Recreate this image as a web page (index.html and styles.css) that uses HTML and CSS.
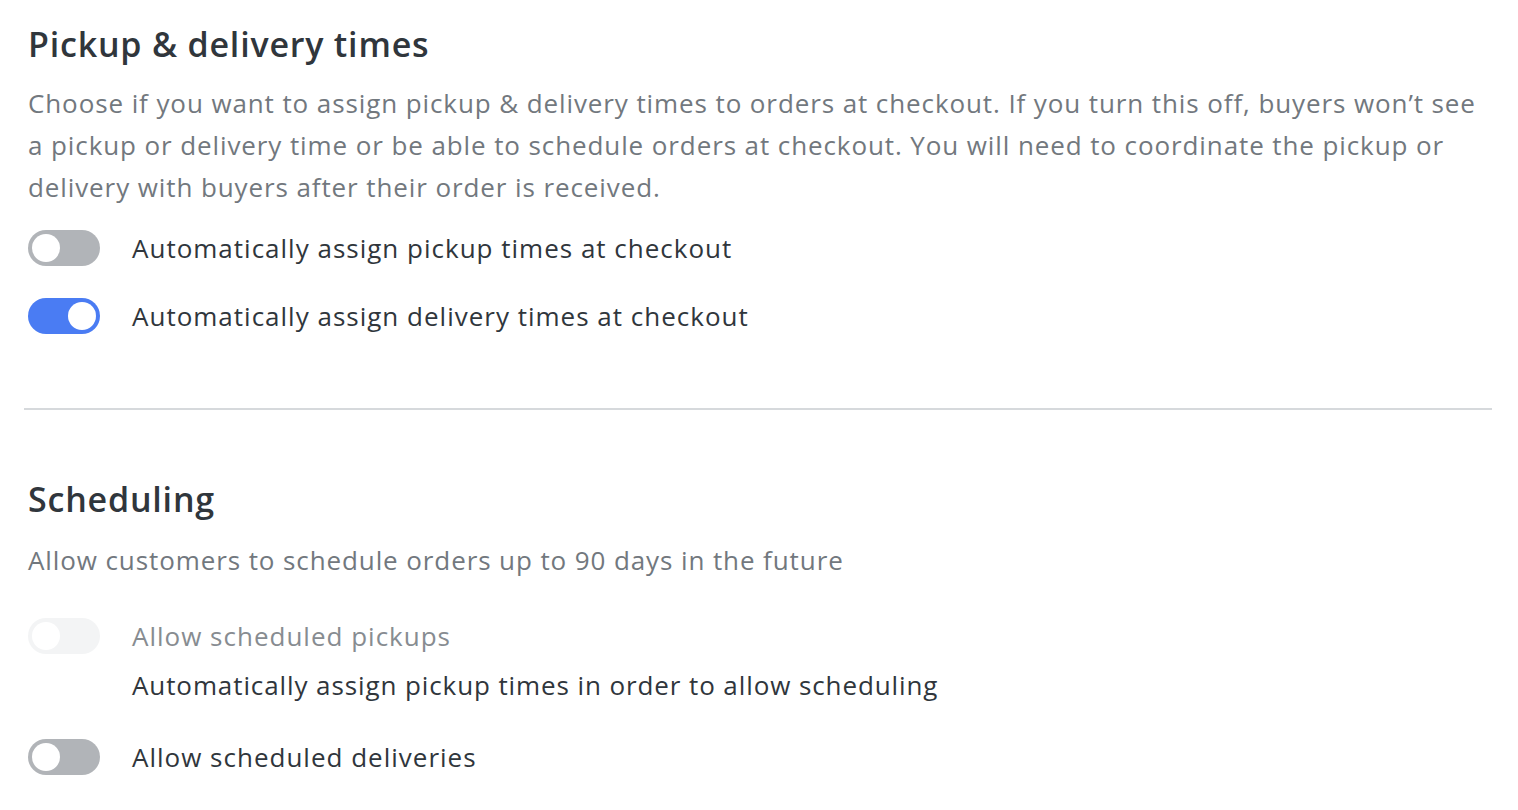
FILE: index.html
```html
<!DOCTYPE html>
<html>
<head>
<meta charset="utf-8">
<link rel="stylesheet" href="styles.css">
</head>
<body>
<div class="page">
  <section class="section">
    <h2 class="title">Pickup &amp; delivery times</h2>
    <p class="desc">Choose if you want to assign pickup &amp; delivery times to orders at checkout. If you turn this off, buyers won’t see a pickup or delivery time or be able to schedule orders at checkout. You will need to coordinate the pickup or delivery with buyers after their order is received.</p>
    <div class="row row-first">
      <span class="toggle"><span class="knob"></span></span>
      <span class="label">Automatically assign pickup times at checkout</span>
    </div>
    <div class="row">
      <span class="toggle on"><span class="knob"></span></span>
      <span class="label">Automatically assign delivery times at checkout</span>
    </div>
  </section>
  <hr class="divider">
  <section class="section section-sched">
    <h2 class="title">Scheduling</h2>
    <p class="desc">Allow customers to schedule orders up to 90 days in the future</p>
    <div class="row row-sched">
      <span class="toggle disabled"><span class="knob"></span></span>
      <div class="stack">
        <span class="label muted">Allow scheduled pickups</span>
        <span class="label hint">Automatically assign pickup times in order to allow scheduling</span>
      </div>
    </div>
    <div class="row">
      <span class="toggle"><span class="knob"></span></span>
      <span class="label">Allow scheduled deliveries</span>
    </div>
  </section>
</div>
</body>
</html>
```
FILE: styles.css
```css
html, body {
  margin: 0;
  padding: 0;
  background: #ffffff;
}
body {
  font-family: "Open Sans", Lato, Arial, sans-serif;
  color: #30363c;
}
.page {
  padding: 0 26px 0 24px;
}
.section {
  padding: 0 6px 0 4px;
}
.title {
  margin: 0;
  padding-top: 22px;
  font-size: 34px;
  line-height: 44px;
  font-weight: 600;
  letter-spacing: 0.8px;
  color: #30363c;
}
.desc {
  margin: 16px 0 0;
  font-size: 26px;
  line-height: 42px;
  letter-spacing: 0.9px;
  color: #72787e;
}
.row {
  display: flex;
  align-items: flex-start;
  gap: 32px;
  margin-top: 32px;
}
.row-first {
  margin-top: 22px;
}
.label {
  font-size: 26px;
  line-height: 36px;
  letter-spacing: 1px;
  color: #30363c;
}
.toggle {
  flex: none;
  width: 72px;
  height: 36px;
  border-radius: 18px;
  background: #b1b4b8;
  display: flex;
  align-items: center;
  padding: 0 4px;
  box-sizing: border-box;
}
.knob {
  width: 28px;
  height: 28px;
  border-radius: 50%;
  background: #ffffff;
}
.toggle.on {
  background: #4a7cf3;
  justify-content: flex-end;
}
.toggle.disabled {
  background: #f3f4f5;
}
.divider {
  margin: 74px 0 0;
  border: 0;
  height: 2px;
  background: #d6d9dc;
}
.stack {
  display: flex;
  flex-direction: column;
  gap: 13px;
}
.muted {
  color: #878c91;
}
.hint {
  letter-spacing: 0.9px;
}
.section-sched .title {
  padding-top: 67px;
}
.section-sched .desc {
  margin-top: 18px;
}
.row-sched {
  margin-top: 37px;
}
.row-sched + .row {
  margin-top: 36px;
}
```
